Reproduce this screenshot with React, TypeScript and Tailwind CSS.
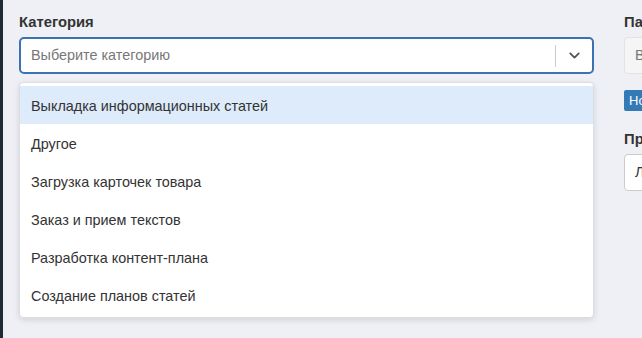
import { ChevronDown } from 'lucide-react';

const options = [
  'Выкладка информационных статей',
  'Другое',
  'Загрузка карточек товара',
  'Заказ и прием текстов',
  'Разработка контент-плана',
  'Создание планов статей',
];

export default function App() {
  return (
    <div
      className="flex h-[338px] w-[642px] overflow-hidden bg-[#eef0f5] text-[#333]"
      style={{ fontFamily: '"Liberation Sans", Arial, sans-serif' }}
    >
      <div className="w-[3px] shrink-0 bg-[#1f2b33]" />
      <div className="flex gap-[30px] pl-4 pt-3">
        <div className="w-[575px] shrink-0">
          <label className="mb-[5px] block text-[14.8px] font-bold leading-5 text-[#333]">Категория</label>
          <div className="flex h-[37px] items-center rounded-[5px] border-2 border-[#3a72b4] bg-white">
            <span className="flex-1 pl-[10px] pt-[1px] text-[14.4px] text-[#777]">Выберите категорию</span>
            <div className="h-[22px] w-px bg-[#ccc]" />
            <div className="flex w-[36px] items-center justify-center text-[#555]">
              <ChevronDown size={17} strokeWidth={2.6} />
            </div>
          </div>
          <div className="mt-2 rounded-[4px] border border-[#dcdde0] bg-white py-[3px] shadow-[0_2px_6px_rgba(0,0,0,0.12)]">
            {options.map((o, i) => (
              <div
                key={o}
                className={`flex h-[38px] items-center pl-[11px] pt-[3px] text-[14.4px] text-[#333] ${i === 0 ? 'bg-[#deebfb]' : ''}`}
              >
                {o}
              </div>
            ))}
          </div>
        </div>
        <div className="w-[200px] shrink-0">
          <label className="mb-[5px] block text-[14.8px] font-bold leading-5 text-[#333]">Параметры</label>
          <div className="flex h-[37px] items-center rounded-[4px] border border-[#e3e3e3] bg-[#f5f5f5] pl-[10px] text-[14.4px] text-[#777]">
            Выберите
          </div>
          <div className="mt-[16px] inline-block rounded-[2px] bg-[#337ab7] px-[5px] text-[13px] leading-[21px] text-white">
            Новый
          </div>
          <label className="mb-[5px] mt-[17px] block text-[14.8px] font-bold leading-5 text-[#333]">Проект</label>
          <div className="flex h-[37px] items-center rounded-[4px] border border-[#ccc] bg-white pl-[10px] text-[14.4px] text-[#333]">
            Личный
          </div>
        </div>
      </div>
    </div>
  );
}
